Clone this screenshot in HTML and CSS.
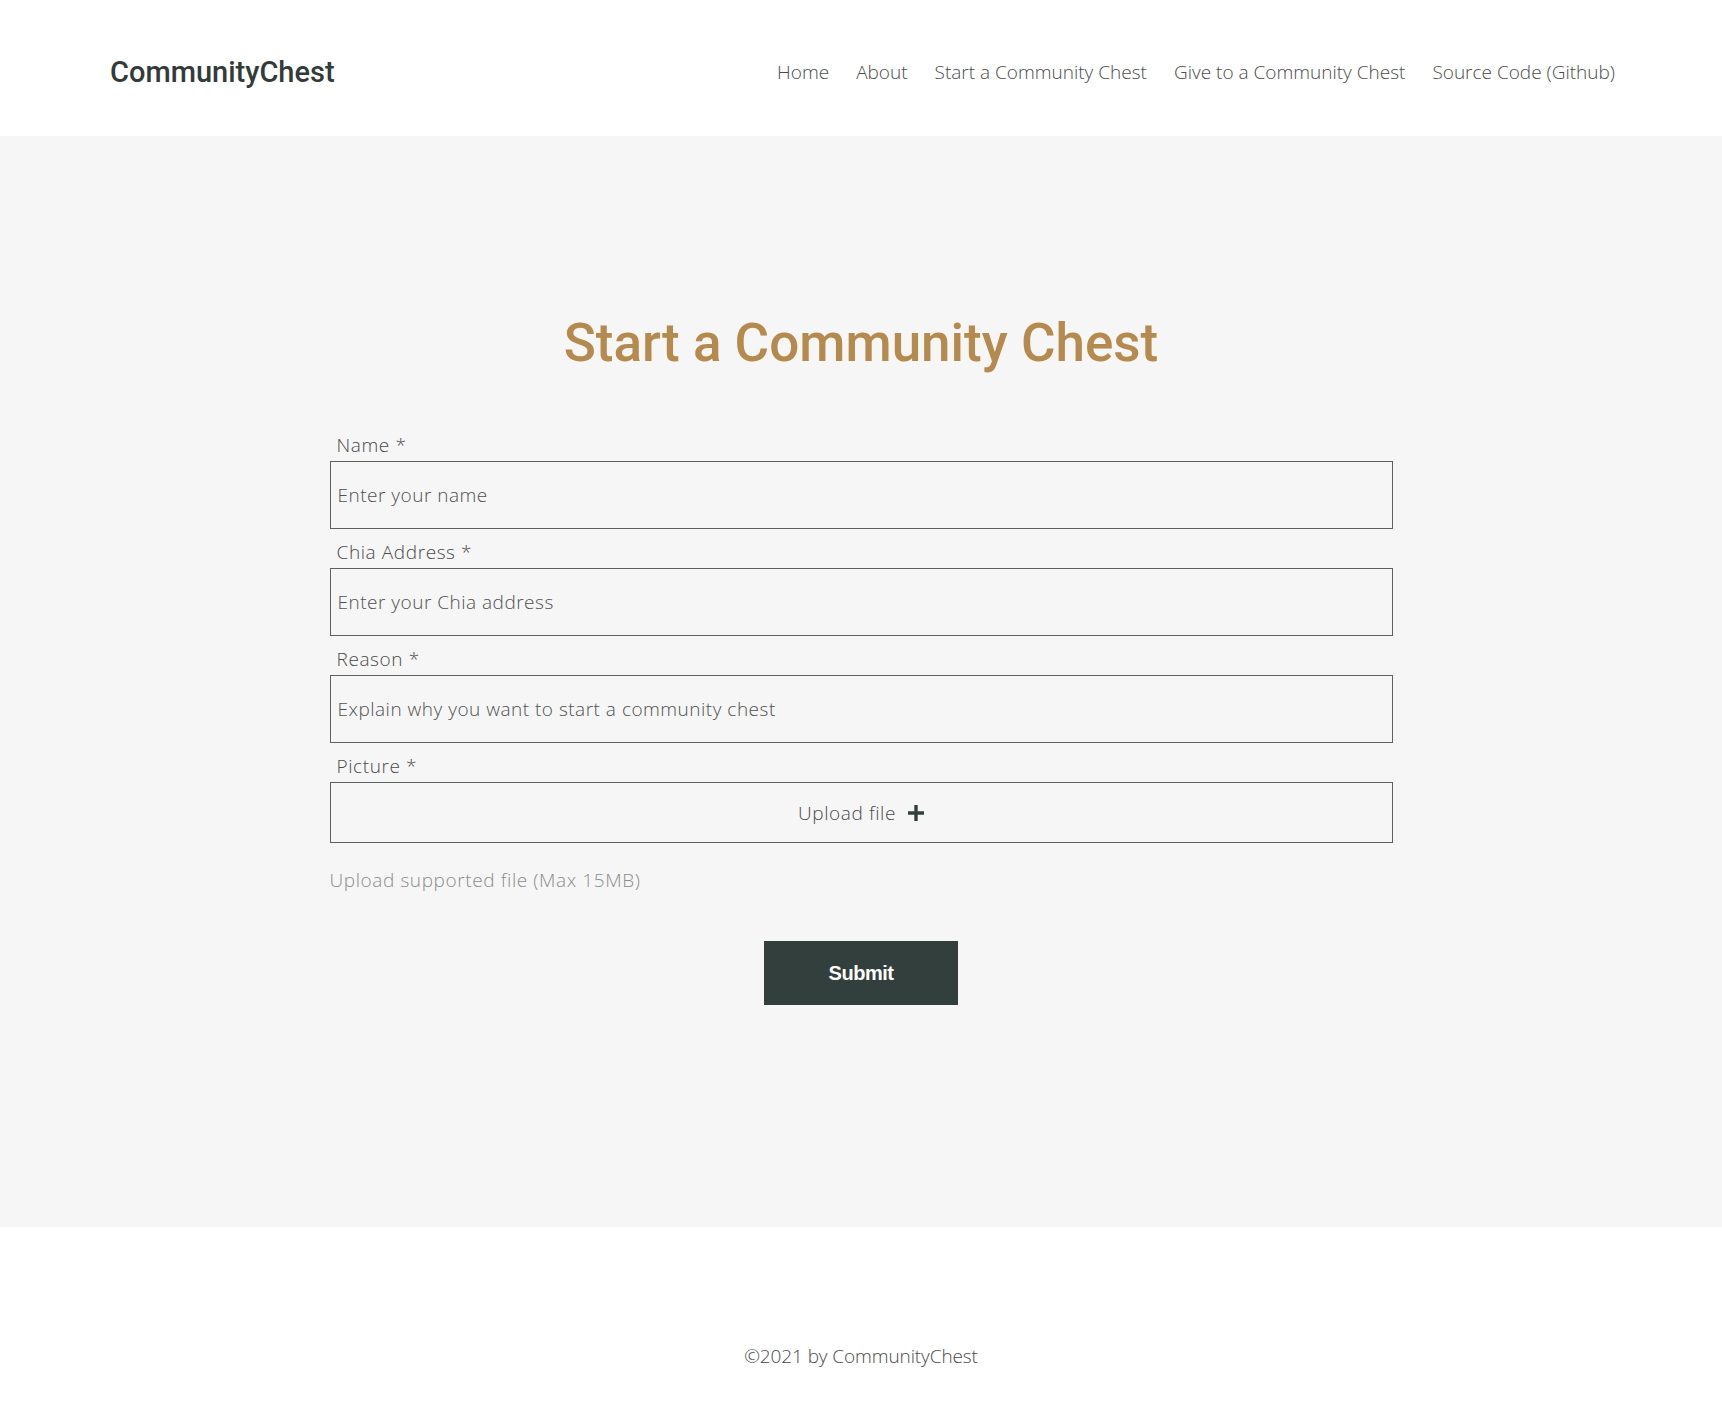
FILE: index.html
```html
<!DOCTYPE html>
<html lang="en">
<head>
  <meta charset="UTF-8">
  <title>Start a Community Chest | CommunityChest</title>
  <link rel="stylesheet" href="styles.css">
</head>
<body>
<header class="header">
  <a class="header__logo" href="#">CommunityChest</a>
  <nav class="nav">
    <a class="nav__link" href="#">Home</a>
    <a class="nav__link" href="#">About</a>
    <a class="nav__link" href="#">Start a Community Chest</a>
    <a class="nav__link" href="#">Give to a Community Chest</a>
    <a class="nav__link" href="#">Source Code (Github)</a>
  </nav>
</header>

<main class="main">
  <h1 class="main__title">Start a Community Chest</h1>

  <form class="form">
    <div class="field">
      <label class="field__label" for="name">Name *</label>
      <input class="field__input" id="name" type="text" placeholder="Enter your name">
    </div>
    <div class="field">
      <label class="field__label" for="address">Chia Address *</label>
      <input class="field__input" id="address" type="text" placeholder="Enter your Chia address">
    </div>
    <div class="field">
      <label class="field__label" for="reason">Reason *</label>
      <input class="field__input" id="reason" type="text" placeholder="Explain why you want to start a community chest">
    </div>
    <div class="field">
      <span class="field__label">Picture *</span>
      <button class="upload" type="button">
        <span>Upload file</span>
        <svg class="upload__icon" viewBox="0 0 16 16" xmlns="http://www.w3.org/2000/svg">
          <path d="M6.3 0h3.4v6.3H16v3.4H9.7V16H6.3V9.7H0V6.3h6.3z" />
        </svg>
      </button>
    </div>
    <p class="form__hint">Upload supported file (Max 15MB)</p>
    <button class="form__submit" type="submit">Submit</button>
  </form>
</main>

<footer class="footer">
  <p>©2021 by CommunityChest</p>
</footer>
</body>
</html>
```

FILE: styles.css
```css
* {
  margin: 0;
  padding: 0;
  box-sizing: border-box;
}

:root {
  --color-text: #4a4a4a;
  --color-dark: #323f3d;
  --color-gold: #b58a4e;
  --color-bg: #f6f6f6;
  --font-light: "Open Sans", Lato, sans-serif;
  --font-head: Roboto, "Liberation Sans", sans-serif;
}

body {
  background: #fff;
  color: var(--color-text);
  font-family: var(--font-light);
  font-weight: 300;
  font-size: 19px;
}

a {
  color: inherit;
  text-decoration: none;
}

/* header */
.header {
  height: 136px;
  padding: 8px 107px 0 110px;
  display: flex;
  align-items: center;
  justify-content: space-between;
}

.header__logo {
  font-family: var(--font-head);
  font-weight: 500;
  font-size: 29px;
  color: #333b3a;
}

.nav {
  display: flex;
  gap: 27px;
}

.nav__link {
  color: #4c4c4c;
}

/* main */
.main {
  background: var(--color-bg);
  padding: 180px 0 222px;
}

.main__title {
  font-family: var(--font-head);
  font-weight: 500;
  font-size: 53px;
  line-height: 54px;
  text-align: center;
  color: var(--color-gold);
  margin-bottom: 64px;
}

.form {
  width: 1063px;
  margin: 0 auto;
  display: flex;
  flex-direction: column;
  gap: 12px;
  letter-spacing: 0.5px;
}

.field {
  display: flex;
  flex-direction: column;
}

.field__label {
  line-height: 22px;
  padding-left: 7px;
  margin-bottom: 5px;
  letter-spacing: 0.6px;
}

.field__input {
  height: 68px;
  padding: 0 7px;
  border: 1px solid #5c605f;
  background: transparent;
  font: inherit;
  letter-spacing: 0.5px;
  color: #333;
}

.field__input::placeholder {
  color: #4f5251;
  opacity: 1;
}

.upload {
  height: 61px;
  border: 1px solid #5c605f;
  background: transparent;
  display: flex;
  align-items: center;
  justify-content: center;
  gap: 12px;
  font: inherit;
  letter-spacing: 0.6px;
  color: var(--color-text);
  cursor: pointer;
}

.upload__icon {
  width: 16px;
  height: 16px;
  fill: var(--color-dark);
}

.form__hint {
  margin-top: 14px;
  line-height: 22px;
  letter-spacing: 0.6px;
  color: #8a8d8c;
}

.form__submit {
  align-self: center;
  margin-top: 38px;
  width: 194px;
  height: 64px;
  border: none;
  background: var(--color-dark);
  color: #fff;
  font-family: "Liberation Sans", Arial, sans-serif;
  font-weight: 700;
  font-size: 20px;
  letter-spacing: -0.5px;
  cursor: pointer;
}

/* footer */
.footer {
  height: 190px;
  padding-top: 118px;
  text-align: center;
  line-height: 22px;
  letter-spacing: -0.1px;
}
```
